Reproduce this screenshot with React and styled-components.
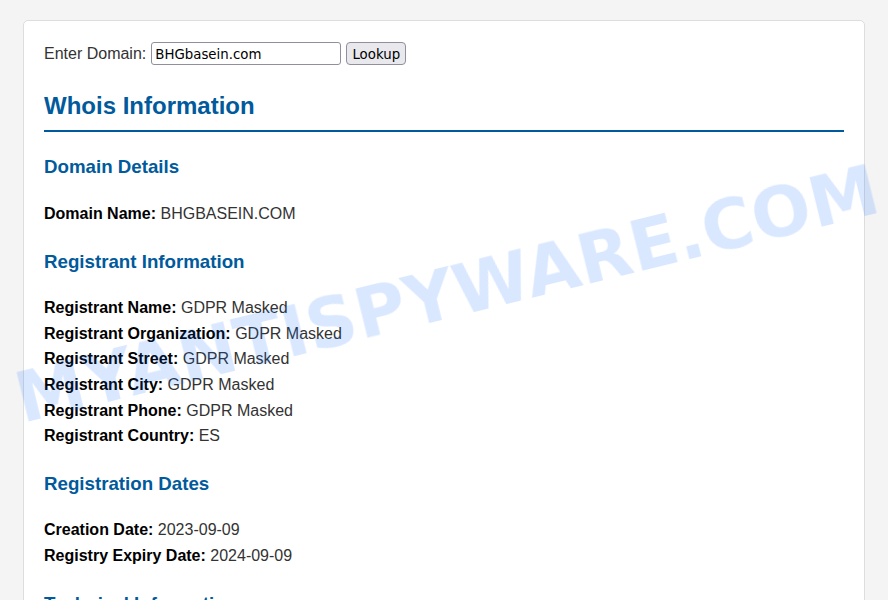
import React from 'react';
import styled, { createGlobalStyle } from 'styled-components';

const GlobalStyle = createGlobalStyle`
	html, body {
		height: 100%;
		overflow: hidden;
	}
	body {
		margin: 0;
		background: #f4f4f4;
		color: #333;
		font-family: "Liberation Sans", Arial, sans-serif;
		font-size: 16px;
		line-height: 1.6;
	}
`;

const Card = styled.main`
	position: relative;
	box-sizing: content-box;
	max-width: 800px;
	margin: 20px auto;
	padding: 20px;
	background: #fff;
	border: 1px solid #ddd;
	border-radius: 5px;
`;

const LookupForm = styled.form`
	display: flex;
	align-items: center;
	margin-bottom: 20px;
	height: 25.6px;
`;

const DomainLabel = styled.label`
	margin-right: 5px;
`;

const DomainInput = styled.input`
	box-sizing: border-box;
	width: 190px;
	height: 23px;
	margin: 0 5px 0 0;
	padding: 2px 3px 0;
	color: #000;
	font-family: "DejaVu Sans", sans-serif;
	font-size: 13.33px;
	background: #fff;
	border: 1px solid #8f8f9d;
	border-radius: 3px;
`;

const LookupButton = styled.button`
	box-sizing: border-box;
	width: 60px;
	height: 23px;
	margin: 0;
	padding: 2px 0 0;
	color: #000;
	font-family: "DejaVu Sans", sans-serif;
	font-size: 13.33px;
	background: #e9e9ed;
	border: 1px solid #8f8f9d;
	border-radius: 4px;
`;

const Title = styled.h1`
	margin: 0 0 20.3px;
	padding-bottom: 5px;
	color: #005a9c;
	font-size: 24px;
	border-bottom: 2px solid #005a9c;
`;

const SectionTitle = styled.h2`
	margin: 0 0 18.72px;
	color: #005a9c;
	font-size: 18.72px;
	line-height: 1.6;
`;

const Section = styled.section`
	margin-bottom: 20px;
`;

const Row = styled.div``;

const Label = styled.strong`
	color: #000;
`;

const Watermark = styled.div`
	position: absolute;
	left: -20px;
	top: 238px;
	color: rgba(0, 102, 255, 0.15);
	font-family: "DejaVu Sans", sans-serif;
	font-size: 69.7px;
	font-weight: 700;
	line-height: 1;
	white-space: nowrap;
	transform: rotate(-13.8deg);
	filter: blur(0.6px);
	pointer-events: none;
`;

const sections = [
	{
		title: 'Domain Details',
		rows: [['Domain Name', 'BHGBASEIN.COM']],
	},
	{
		title: 'Registrant Information',
		rows: [
			['Registrant Name', 'GDPR Masked'],
			['Registrant Organization', 'GDPR Masked'],
			['Registrant Street', 'GDPR Masked'],
			['Registrant City', 'GDPR Masked'],
			['Registrant Phone', 'GDPR Masked'],
			['Registrant Country', 'ES'],
		],
	},
	{
		title: 'Registration Dates',
		rows: [
			['Creation Date', '2023-09-09'],
			['Registry Expiry Date', '2024-09-09'],
		],
	},
	{
		title: 'Technical Information',
		rows: [],
	},
];

export default function App() {
	return (
		<>
			<GlobalStyle />
			<Card>
				<LookupForm onSubmit={e => e.preventDefault()}>
					<DomainLabel htmlFor="domain">Enter Domain:</DomainLabel>
					<DomainInput id="domain" type="text" defaultValue="BHGbasein.com" />
					<LookupButton type="submit">Lookup</LookupButton>
				</LookupForm>
				<Title>Whois Information</Title>
				{sections.map(section => (
					<Section key={section.title}>
						<SectionTitle>{section.title}</SectionTitle>
						{section.rows.map(([label, value]) => (
							<Row key={label}>
								<Label>{label}:</Label> {value}
							</Row>
						))}
					</Section>
				))}
				<Watermark>MYANTISPYWARE.COM</Watermark>
			</Card>
		</>
	);
}
